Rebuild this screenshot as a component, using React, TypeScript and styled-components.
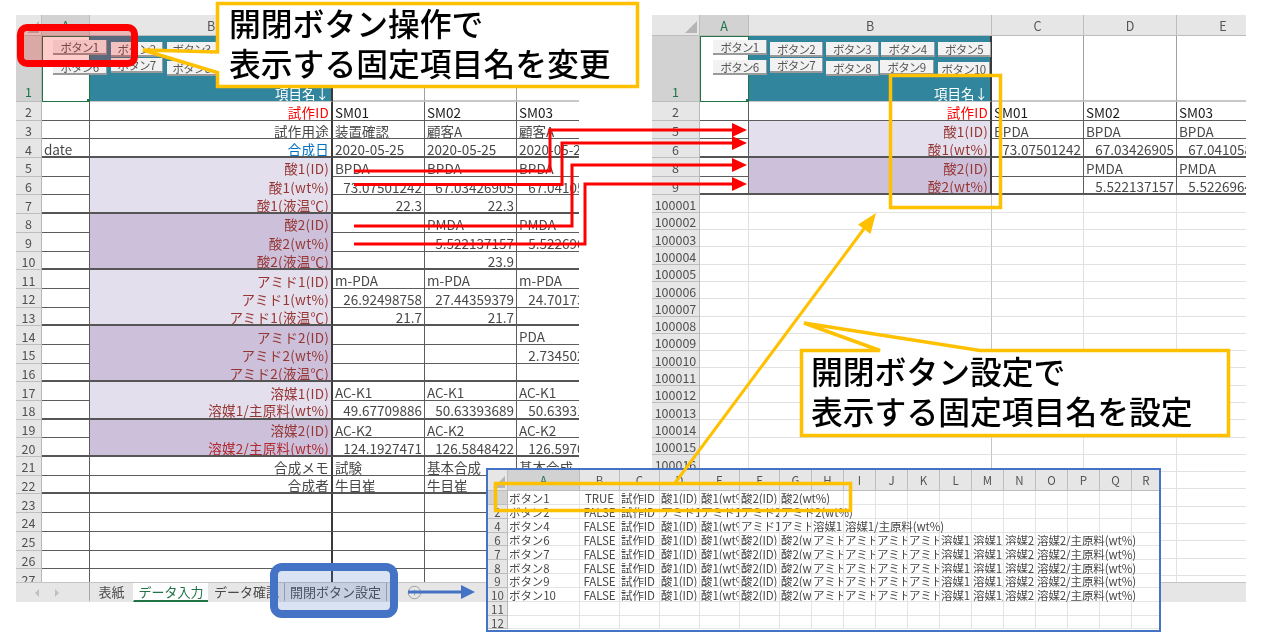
import React from 'react';
import styled, { createGlobalStyle } from 'styled-components';
import { CirclePlus } from 'lucide-react';

const FONT = '"Noto Sans CJK JP", "Noto Sans", sans-serif';
const GREEN = '#217346';
const GOLD = '#ffc000';
const BLUE = '#4472c4';
const RED = '#ff0000';

const TONES: Record<string, string> = {
  red: '#ff0000',
  blue: '#0070c0',
  acid: '#963634',
  deep: '#b02a30',
  plain: '#484848',
  ink: '#1a1a1a',
};
const BANDS: Record<string, string> = {
  light: '#e4dfec',
  dark: '#ccc0da',
  teal: '#31859c',
  white: '#ffffff',
};

const GlobalStyle = createGlobalStyle`
  html, body {
    margin: 0;
    padding: 0;
    background: #ffffff;
    font-family: ${FONT};
  }
`;

const Stage = styled.div`
  position: relative;
  width: 1280px;
  height: 640px;
  overflow: hidden;
  background: #ffffff;
  filter: blur(0.35px);
`;

const SheetFrame = styled.div<{ $left: number; $width: number }>`
  position: absolute;
  isolation: isolate;
  left: ${({ $left }) => $left}px;
  top: 15px;
  width: ${({ $width }) => $width}px;
  height: 587px;
  display: flex;
  flex-direction: column;
  overflow: hidden;
`;

const SheetGrid = styled.div<{ $cols: string; $rows: string }>`
  position: relative;
  flex: 1;
  min-height: 0;
  overflow: hidden;
  display: grid;
  grid-template-columns: ${({ $cols }) => $cols};
  grid-template-rows: ${({ $rows }) => $rows};
  align-content: start;
`;

const Corner = styled.div`
  position: relative;
  background: #e6e6e6;
  border-bottom: 1px solid #bdbdbd;
  border-right: 1px solid #bdbdbd;

  &::after {
    content: '';
    position: absolute;
    right: 2px;
    bottom: 2px;
    border-style: solid;
    border-width: 0 0 12px 12px;
    border-color: transparent transparent #b5b5b5 transparent;
  }
`;

const ColHead = styled.div<{ $selected?: boolean; $size?: number }>`
  display: flex;
  align-items: center;
  justify-content: center;
  background: ${({ $selected }) => ($selected ? '#d2d2d2' : '#e6e6e6')};
  color: ${({ $selected }) => ($selected ? GREEN : '#555555')};
  border-right: 1px solid #bdbdbd;
  border-bottom: 1px solid #bdbdbd;
  font-size: ${({ $size }) => $size ?? 12.5}px;
`;

const RowHead = styled.div<{ $selected?: boolean; $size?: number; $low?: boolean }>`
  display: flex;
  align-items: ${({ $low }) => ($low ? 'flex-end' : 'center')};
  justify-content: center;
  overflow: hidden;
  padding-top: ${({ $low }) => ($low ? 0 : 2)}px;
  box-sizing: border-box;
  background: ${({ $selected }) => ($selected ? '#d2d2d2' : '#e6e6e6')};
  color: ${({ $selected }) => ($selected ? GREEN : '#505050')};
  border-right: 1px solid #b8b8b8;
  border-bottom: 1px solid #bdbdbd;
  font-size: ${({ $size }) => $size ?? 12.5}px;
`;

const Cell = styled.div<{
  $align?: string;
  $tone?: string;
  $fill?: string;
  $bottom?: string;
  $right?: string;
  $spill?: boolean;
  $size?: number;
  $pad?: number;
  $track?: number;
}>`
  position: relative;
  z-index: ${({ $spill }) => ($spill ? 1 : 0)};
  display: flex;
  align-items: center;
  justify-content: ${({ $align }) => $align ?? 'flex-start'};
  box-sizing: border-box;
  min-width: 0;
  padding: 2px ${({ $pad }) => $pad ?? 2}px 0;
  overflow: ${({ $spill }) => ($spill ? 'visible' : 'hidden')};
  white-space: nowrap;
  font-size: ${({ $size }) => $size ?? 13.5}px;
  letter-spacing: ${({ $track }) => $track ?? 0}px;
  color: ${({ $tone }) => TONES[$tone ?? 'plain']};
  background: ${({ $fill }) => BANDS[$fill ?? 'white']};
  border-bottom: ${({ $bottom }) => $bottom ?? '1px solid #5c5c5c'};
  border-right: ${({ $right }) => $right ?? '1px solid #5c5c5c'};
`;

const HeaderCell = styled(Cell)`
  align-items: flex-end;
  color: #ffffff;
  line-height: 15px;
`;

const Selected = styled.div`
  position: relative;
  box-sizing: border-box;
  background: #ffffff;
  border: 1.5px solid ${GREEN};

  &::after {
    content: '';
    position: absolute;
    right: -3px;
    bottom: -3px;
    width: 5px;
    height: 5px;
    background: ${GREEN};
  }
`;

const SheetButton = styled.div<{ $x: number; $y: number; $w: number }>`
  position: absolute;
  z-index: 2;
  left: ${({ $x }) => $x}px;
  top: ${({ $y }) => $y}px;
  width: ${({ $w }) => $w}px;
  height: 15px;
  display: flex;
  align-items: center;
  justify-content: center;
  box-sizing: border-box;
  overflow: hidden;
  background: #f2f2f2;
  border-right: 1px solid #9a9a9a;
  border-bottom: 2px solid #9a9a9a;
  color: #555555;
  font-size: 11.5px;
  letter-spacing: -0.7px;
`;

const TabBar = styled.div`
  height: 20px;
  flex: none;
  display: flex;
  align-items: stretch;
  background: #e6e6e6;
  border-top: 1px solid #c4c4c4;
  box-sizing: border-box;
`;

const TabNav = styled.div`
  width: 73px;
  flex: none;
  display: flex;
  align-items: center;
  gap: 14px;
  padding-left: 18px;
  box-sizing: border-box;
  color: #c0c0c0;
`;

const Tab = styled.div<{ $w: number; $active?: boolean; $rule?: boolean }>`
  width: ${({ $w }) => $w}px;
  flex: none;
  display: flex;
  align-items: center;
  justify-content: center;
  box-sizing: border-box;
  overflow: hidden;
  white-space: nowrap;
  font-size: 13px;
  color: ${({ $active }) => ($active ? GREEN : '#4a4a4a')};
  background: ${({ $active }) => ($active ? '#ffffff' : 'transparent')};
  border-bottom: 2px solid ${({ $active }) => ($active ? GREEN : 'transparent')};
  border-left: 1px solid ${({ $rule }) => ($rule ? '#a8a8a8' : 'transparent')};
`;

const TabPlus = styled.div`
  display: flex;
  align-items: center;
  margin-left: 20px;
  color: #777777;
`;

const Popup = styled.div`
  position: absolute;
  isolation: isolate;
  left: 486px;
  top: 468px;
  width: 675px;
  height: 164px;
  box-sizing: border-box;
  border: 2px solid ${BLUE};
  background: #ffffff;
  overflow: hidden;
`;

const Highlight = styled.div<{ $color: string; $wash: string; $border: number; $radius: number }>`
  position: absolute;
  box-sizing: border-box;
  border: ${({ $border }) => $border}px solid ${({ $color }) => $color};
  border-radius: ${({ $radius }) => $radius}px;
  background: ${({ $wash }) => $wash};
`;

const RedHighlight = styled(Highlight)`
  left: 17px;
  top: 24px;
  width: 121px;
  height: 43px;
`;

const BlueHighlight = styled(Highlight)`
  left: 270px;
  top: 563px;
  width: 128px;
  height: 55px;
`;

const Overlay = styled.svg`
  position: absolute;
  left: 0;
  top: 0;
  pointer-events: none;
`;

const Callout = styled.div<{ $x: number; $y: number }>`
  position: absolute;
  left: ${({ $x }) => $x}px;
  top: ${({ $y }) => $y}px;
  font-size: 31.8px;
  line-height: 40px;
  font-weight: 500;
  color: #000000;
  white-space: nowrap;
`;

type SheetRow = {
  head: string;
  a?: string;
  label?: string;
  tone?: string;
  band?: string;
  values?: string[];
  end?: boolean;
};

const leftRows: SheetRow[] = [
  { head: '2', label: '試作ID', tone: 'red', values: ['SM01', 'SM02', 'SM03'] },
  { head: '3', label: '試作用途', values: ['装置確認', '顧客A', '顧客A'] },
  { head: '4', a: 'date', label: '合成日', tone: 'blue', values: ['2020-05-25', '2020-05-25', '2020-05-25'], end: true },
  { head: '5', label: '酸1(ID)', tone: 'acid', band: 'light', values: ['BPDA', 'BPDA', 'BPDA'] },
  { head: '6', label: '酸1(wt%)', tone: 'acid', band: 'light', values: ['73.07501242', '67.03426905', '67.04105812'] },
  { head: '7', label: '酸1(液温℃)', tone: 'acid', band: 'light', values: ['22.3', '22.3', ''], end: true },
  { head: '8', label: '酸2(ID)', tone: 'acid', band: 'dark', values: ['', 'PMDA', 'PMDA'] },
  { head: '9', label: '酸2(wt%)', tone: 'acid', band: 'dark', values: ['', '5.522137157', '5.522696412'] },
  { head: '10', label: '酸2(液温℃)', tone: 'acid', band: 'dark', values: ['', '23.9', ''], end: true },
  { head: '11', label: 'アミド1(ID)', tone: 'acid', band: 'light', values: ['m-PDA', 'm-PDA', 'm-PDA'] },
  { head: '12', label: 'アミド1(wt%)', tone: 'acid', band: 'light', values: ['26.92498758', '27.44359379', '24.70173145'] },
  { head: '13', label: 'アミド1(液温℃)', tone: 'acid', band: 'light', values: ['21.7', '21.7', ''], end: true },
  { head: '14', label: 'アミド2(ID)', tone: 'acid', band: 'dark', values: ['', '', 'PDA'] },
  { head: '15', label: 'アミド2(wt%)', tone: 'acid', band: 'dark', values: ['', '', '2.734502187'] },
  { head: '16', label: 'アミド2(液温℃)', tone: 'acid', band: 'dark', values: ['', '', ''], end: true },
  { head: '17', label: '溶媒1(ID)', tone: 'acid', band: 'light', values: ['AC-K1', 'AC-K1', 'AC-K1'] },
  { head: '18', label: '溶媒1/主原料(wt%)', tone: 'acid', band: 'light', values: ['49.67709886', '50.63393689', '50.63931272'], end: true },
  { head: '19', label: '溶媒2(ID)', tone: 'acid', band: 'dark', values: ['AC-K2', 'AC-K2', 'AC-K2'] },
  { head: '20', label: '溶媒2/主原料(wt%)', tone: 'deep', band: 'dark', values: ['124.1927471', '126.5848422', '126.5970133'], end: true },
  { head: '21', label: '合成メモ', values: ['試験', '基本合成', '基本合成'] },
  { head: '22', label: '合成者', values: ['牛目崔', '牛目崔', '牛目崔'], end: true },
  { head: '23', label: '', values: ['', '', ''] },
  { head: '24', label: '', values: ['', '', ''] },
  { head: '25', label: '', values: ['', '', ''] },
  { head: '26', label: '', values: ['', '', ''] },
  { head: '27', label: '', values: ['', '', ''] },
];

const rightRows: SheetRow[] = [
  { head: '2', label: '試作ID', tone: 'red', values: ['SM01', 'SM02', 'SM03'] },
  { head: '5', label: '酸1(ID)', tone: 'acid', band: 'light', values: ['BPDA', 'BPDA', 'BPDA'] },
  { head: '6', label: '酸1(wt%)', tone: 'acid', band: 'light', values: ['73.07501242', '67.03426905', '67.04105812'], end: true },
  { head: '8', label: '酸2(ID)', tone: 'acid', band: 'dark', values: ['', 'PMDA', 'PMDA'] },
  { head: '9', label: '酸2(wt%)', tone: 'acid', band: 'dark', values: ['', '5.522137157', '5.522696412'], end: true },
];

const leftButtons = [
  { x: 37, y: 25, w: 54, name: 'ボタン1' },
  { x: 95, y: 27, w: 52, name: 'ボタン2' },
  { x: 151, y: 27, w: 50, name: 'ボタン3' },
  { x: 37, y: 45, w: 54, name: 'ボタン6' },
  { x: 95, y: 43, w: 52, name: 'ボタン7' },
  { x: 151, y: 46, w: 50, name: 'ボタン8' },
];

const rightButtons = [
  { x: 61, y: 25, w: 54, name: 'ボタン1' },
  { x: 118, y: 27, w: 53, name: 'ボタン2' },
  { x: 174, y: 27, w: 53, name: 'ボタン3' },
  { x: 229, y: 27, w: 54, name: 'ボタン4' },
  { x: 286, y: 27, w: 53, name: 'ボタン5' },
  { x: 61, y: 45, w: 54, name: 'ボタン6' },
  { x: 118, y: 43, w: 53, name: 'ボタン7' },
  { x: 174, y: 46, w: 53, name: 'ボタン8' },
  { x: 228, y: 45, w: 54, name: 'ボタン9' },
  { x: 286, y: 47, w: 52, name: 'ボタン10' },
];

const isNumber = (text: string) => /^\d+(\.\d+)?$/.test(text);

const THICK = '2px solid #555555';
const THIN = '1px solid #5c5c5c';
const COL_B = '2px solid #3a3a3a';

function DataRows({ rows }: { rows: SheetRow[] }) {
  return (
    <>
      {rows.map((row) => {
        const line = row.end ? THICK : THIN;
        const labelLine = row.band && !row.end ? 'none' : line;
        return (
          <React.Fragment key={row.head}>
            <RowHead>{row.head}</RowHead>
            <Cell $bottom={line}>{row.a}</Cell>
            <Cell $fill={row.band} $tone={row.tone} $align="flex-end" $bottom={labelLine} $right={COL_B} $track={0.25}>
              {row.label}
            </Cell>
            {(row.values ?? []).map((value, i) => (
              <Cell
                key={i}
                $align={isNumber(value) ? 'flex-end' : 'flex-start'}
                $tone={value.startsWith('SM') ? 'ink' : 'plain'}
                $bottom={line}
              >
                {value}
              </Cell>
            ))}
          </React.Fragment>
        );
      })}
    </>
  );
}

function FirstRow() {
  return (
    <>
      <RowHead $selected $low>1</RowHead>
      <Selected />
      <HeaderCell $fill="teal" $align="flex-end" $bottom="1px solid #c8c8c8" $right={COL_B}>項目名↓</HeaderCell>
      <Cell $bottom="2px solid #c8c8c8" $right="1px solid #a0a0a0" />
      <Cell $bottom="2px solid #c8c8c8" $right="1px solid #a0a0a0" />
      <Cell $bottom="2px solid #c8c8c8" $right="1px solid #a0a0a0" />
    </>
  );
}

function Tabs() {
  return (
    <TabBar>
      <TabNav>
        <svg width="6" height="10" viewBox="0 0 6 10"><path d="M5 1 1 5l4 4z" fill="currentColor" /></svg>
        <svg width="6" height="10" viewBox="0 0 6 10"><path d="m1 1 4 4-4 4z" fill="currentColor" /></svg>
      </TabNav>
      <Tab $w={44} $rule>表紙</Tab>
      <Tab $w={75} $active>データ入力</Tab>
      <Tab $w={76}>データ確認</Tab>
      <Tab $w={102} $rule>開閉ボタン設定</Tab>
      <Tab $w={1} $rule />
      <TabPlus><CirclePlus size={15} strokeWidth={1} /></TabPlus>
    </TabBar>
  );
}

function LeftSheet() {
  return (
    <SheetFrame $left={16} $width={563}>
      <SheetGrid $cols="26px 48px 243px 92px 92px 93px" $rows="21px 66px repeat(26, 18.7px)">
        <Corner />
        <ColHead $selected>A</ColHead>
        <ColHead>B</ColHead>
        <ColHead>C</ColHead>
        <ColHead>D</ColHead>
        <ColHead>E</ColHead>
        <FirstRow />
        <DataRows rows={leftRows} />
        {leftButtons.map((b) => (
          <SheetButton key={b.name} $x={b.x} $y={b.y} $w={b.w}>{b.name}</SheetButton>
        ))}
      </SheetGrid>
      <Tabs />
    </SheetFrame>
  );
}

const blankRows = Array.from({ length: 23 }, (_, i) => String(100001 + i));
const LIGHT = '1px solid #e1e1e1';

function RightSheet() {
  return (
    <SheetFrame $left={652} $width={594}>
      <SheetGrid $cols="48px 49px 243px 92px 93px 93px" $rows="21px 66px repeat(5, 18.7px) repeat(23, 17.3px)">
        <Corner />
        <ColHead $selected>A</ColHead>
        <ColHead>B</ColHead>
        <ColHead>C</ColHead>
        <ColHead>D</ColHead>
        <ColHead>E</ColHead>
        <FirstRow />
        <DataRows rows={rightRows} />
        {blankRows.map((n) => (
          <React.Fragment key={n}>
            <RowHead $size={12.5}>{n}</RowHead>
            <Cell $bottom={LIGHT} $right={LIGHT} />
            <Cell $bottom={LIGHT} $right="1px solid #c4c4c4" />
            <Cell $bottom={LIGHT} $right={LIGHT} />
            <Cell $bottom={LIGHT} $right={LIGHT} />
            <Cell $bottom={LIGHT} $right={LIGHT} />
          </React.Fragment>
        ))}
        {rightButtons.map((b) => (
          <SheetButton key={b.name} $x={b.x} $y={b.y} $w={b.w}>{b.name}</SheetButton>
        ))}
      </SheetGrid>
      <TabBar />
    </SheetFrame>
  );
}

const popupCols = 'ABCDEFGHIJKLMNOPQR'.split('');
const acid = ['酸1(ID)', '酸1(wt%)', '酸2(ID)', '酸2(wt%)'];
const fullRow = [
  ...acid,
  'アミド1(ID)', 'アミド1(wt%)', 'アミド2(ID)', 'アミド2(wt%)',
  '溶媒1(ID)', '溶媒1/主原料(wt%)', '溶媒2(ID)', '溶媒2/主原料(wt%)',
];

const popupRows: { head: string; cells: string[] }[] = [
  { head: '', cells: ['ボタン1', 'TRUE', '試作ID', ...acid] },
  { head: '2', cells: ['ボタン2', 'FALSE', '試作ID', 'アミド1(ID)', 'アミド1(wt%)', 'アミド2(ID)', 'アミド2(wt%)'] },
  { head: '4', cells: ['ボタン4', 'FALSE', '試作ID', '酸1(ID)', '酸1(wt%)', 'アミド1(ID)', 'アミド1(wt%)', '溶媒1(ID)', '溶媒1/主原料(wt%)'] },
  { head: '6', cells: ['ボタン6', 'FALSE', '試作ID', ...fullRow] },
  { head: '7', cells: ['ボタン7', 'FALSE', '試作ID', ...fullRow] },
  { head: '8', cells: ['ボタン8', 'FALSE', '試作ID', ...fullRow] },
  { head: '9', cells: ['ボタン9', 'FALSE', '試作ID', ...fullRow] },
  { head: '10', cells: ['ボタン10', 'FALSE', '試作ID', ...fullRow] },
  { head: '11', cells: [] },
  { head: '12', cells: [] },
];

const PopupGridLine = '1px solid #e4e4e4';

function PopupSheet() {
  return (
    <Popup>
      <SheetGrid
        $cols="20px 72px 40px 40px 40px 40px 40px 32px 32px 32px 32px 32px 32px 32px 32px 32px 32px 32px 29px"
        $rows="21px repeat(10, 13.85px)"
      >
        <Corner />
        {popupCols.map((c, i) => (
          <ColHead key={c} $selected={i === 0} $size={11.5}>{c}</ColHead>
        ))}
        {popupRows.map((row, r) => (
          <React.Fragment key={row.head || 'first'}>
            <RowHead $selected={r === 0} $size={11.5}>{row.head}</RowHead>
            {popupCols.map((_, c) => {
              const value = row.cells[c] ?? '';
              const isLast = c === row.cells.length - 1;
              return (
                <Cell
                  key={c}
                  $size={11.5}
                  $pad={1}
                  $track={-0.1}
                  $align={c === 1 ? 'center' : 'flex-start'}
                  $spill={isLast}
                  $bottom={PopupGridLine}
                  $right={PopupGridLine}
                >
                  {value}
                </Cell>
              );
            })}
          </React.Fragment>
        ))}
      </SheetGrid>
    </Popup>
  );
}

function Annotations() {
  return (
    <Overlay width="1280" height="640" viewBox="0 0 1280 640">
      <g fill="none" stroke={RED} strokeWidth="3">
        <path d="M354 171H550V130H735" />
        <path d="M354 184.500H562V143H735" />
        <path d="M354 226H572V165H735" />
        <path d="M354 244H585V184H735" />
      </g>
      <g fill={RED}>
        <path d="M732 123l15 7-15 7z" />
        <path d="M732 136l15 7-15 7z" />
        <path d="M732 158l15 7-15 7z" />
        <path d="M732 177l15 7-15 7z" />
      </g>

      <g fill="none" stroke={BLUE}>
        <path d="M408 592H462" strokeWidth="3" />
      </g>
      <path d="M461 585l14 7-14 7z" fill={BLUE} />

      <g fill="none" stroke={GOLD} strokeWidth="3.500">
        <rect x="890.500" y="75.500" width="110" height="132" />
        <rect x="495.500" y="483.500" width="355" height="27" />
      </g>
      <path d="M675 483 866 226" fill="none" stroke={GOLD} strokeWidth="3" />
      <path d="M876 213 870.500 234 858 224.500z" fill={GOLD} />

      <path
        d="M217.500 3.500H637.500V86.500H217.500V72.500L143 50 217.500 52z"
        fill="#ffffff"
        stroke={GOLD}
        strokeWidth="3.500"
      />
      <path
        d="M801.500 350.500H880L804 323 980 350.500H1228.500V435.500H801.500z"
        fill="#ffffff"
        stroke={GOLD}
        strokeWidth="3.500"
      />
    </Overlay>
  );
}

export default function App() {
  return (
    <Stage>
      <GlobalStyle />
      <LeftSheet />
      <RightSheet />
      <PopupSheet />
      <RedHighlight $color={RED} $wash="rgba(255, 0, 0, 0.2)" $border={7} $radius={10} />
      <BlueHighlight $color={BLUE} $wash="rgba(68, 114, 196, 0.2)" $border={8} $radius={12} />
      <Annotations />
      <Callout $x={229} $y={2}>
        開閉ボタン操作で
        <br />
        表示する固定項目名を変更
      </Callout>
      <Callout $x={811} $y={350}>
        開閉ボタン設定で
        <br />
        表示する固定項目名を設定
      </Callout>
    </Stage>
  );
}
